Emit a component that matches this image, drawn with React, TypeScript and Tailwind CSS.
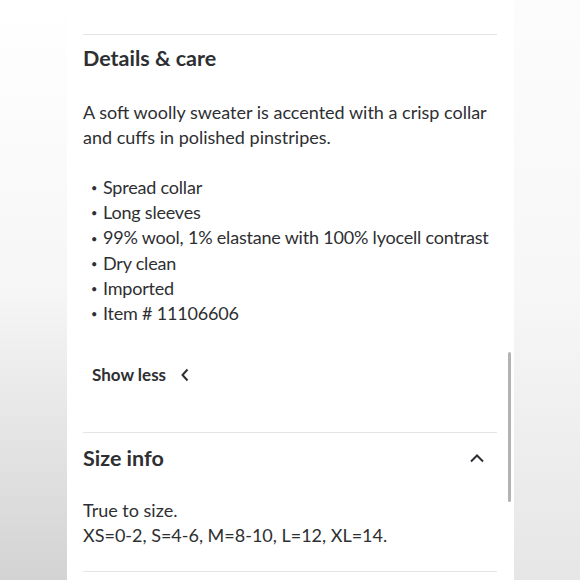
import React from 'react';

const bullets = [
  'Spread collar',
  'Long sleeves',
  '99% wool, 1% elastane with 100% lyocell contrast',
  'Dry clean',
  'Imported',
  'Item # 11106606',
];

const Divider = ({ className = '' }: { className?: string }) => (
  <div className={`h-px bg-[#e3e4e5] ${className}`} />
);

export default function App() {
  return (
    <div
      className="flex w-[580px] h-[580px] overflow-hidden text-[#2e2f32]"
      style={{ fontFamily: 'Lato, "Open Sans", sans-serif' }}
    >
      <div className="w-[67px] shrink-0 bg-gradient-to-b from-[#ffffff] via-[#f6f6f6] to-[#d3d3d3]" />

      <div className="relative w-[447px] shrink-0 bg-white pl-4 pr-[17px]">
        <Divider className="mt-[34px]" />

        <h2 className="mt-[9px] text-[21.5px] leading-[28px] font-bold">Details &amp; care</h2>

        <p className="mt-[28px] text-[18px] leading-[25px]">
          A soft woolly sweater is accented with a crisp collar and cuffs in polished pinstripes.
        </p>

        <ul className="mt-[25px] text-[18px] leading-[25.2px] pl-[8px]">
          {bullets.map((b) => (
            <li key={b} className="flex items-center whitespace-nowrap">
              <span className="w-[12px] shrink-0 text-[11px] leading-none">•</span>
              <span className="tracking-[-0.2px]">{b}</span>
            </li>
          ))}
        </ul>

        <button className="mt-[37px] ml-[9px] flex items-center gap-[14px] text-[17px] leading-[24px] font-bold">
          Show less
          <svg width="10" height="14" viewBox="0 0 10 14" fill="none" stroke="#2e2f32" strokeWidth="2">
            <path d="M7.5 1.5 L2.5 7 L7.5 12.5" />
          </svg>
        </button>

        <Divider className="mt-[45px]" />

        <div className="mt-[11px] flex items-center justify-between pr-3">
          <h2 className="text-[21.5px] leading-[28px] font-bold">Size info</h2>
          <svg width="16" height="10" viewBox="0 0 16 10" fill="none" stroke="#2e2f32" strokeWidth="2">
            <path d="M2 8.5 L8 2.5 L14 8.5" />
          </svg>
        </div>

        <p className="mt-[26px] text-[18px] leading-[25px]">
          True to size.
          <br />
          XS=0-2, S=4-6, M=8-10, L=12, XL=14.
        </p>

        <Divider className="mt-[23px]" />

        <div className="absolute left-[441px] top-[352px] w-[3px] h-[150px] rounded-full bg-[#b3b3b3]" />
      </div>

      <div className="flex-1 bg-gradient-to-b from-[#fcfcfc] via-[#f7f7f7] to-[#e6e6e6]" />
    </div>
  );
}
